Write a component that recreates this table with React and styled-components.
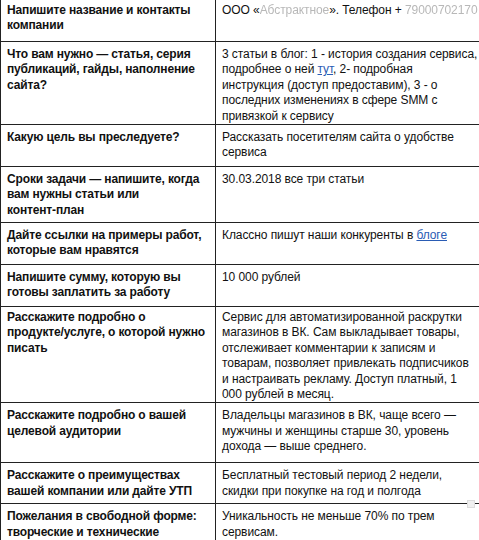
import React from 'react'
import styled, { createGlobalStyle } from 'styled-components'

const Global = createGlobalStyle`
  html, body {
    margin: 0;
    padding: 0;
    background: #fff;
    overflow: hidden;
  }
  body {
    font-family: 'Liberation Sans', Arial, sans-serif;
  }
`

const Page = styled.div`
  width: 479px;
  height: 540px;
  overflow: hidden;
  position: relative;
`

const Table = styled.table`
  border-collapse: collapse;
  width: 488px;
  margin-top: -3px;
  font-size: 12px;
  line-height: 15.4px;
  color: #111;
  table-layout: fixed;
`

const Row = styled.tr``

const Cell = styled.td`
  border: 1px solid #222;
  padding: ${p => (p.$tight ? 3 : 5)}px 6px 0 6px;
  vertical-align: top;
  height: ${p => p.$h}px;
  box-sizing: border-box;
  font-weight: ${p => (p.$head ? 700 : 400)};
  letter-spacing: ${p => (p.$head ? '-0.15px' : '-0.08px')};
  width: ${p => (p.$head ? '215px' : 'auto')};
  white-space: ${p => (p.$nowrap ? 'nowrap' : 'normal')};
  overflow: hidden;
`

const NoBreak = styled.span`
  white-space: nowrap;
`

const Link = styled.a`
  color: #2a5cb4;
  text-decoration: underline;
`

const Hidden = styled.span`
  color: #b8b8b8;
  filter: blur(0.6px);
`

const ScrollNub = styled.div`
  position: absolute;
  right: 4px;
  top: 500px;
  width: 8px;
  height: 8px;
  background: #f0f0f0;
  border: 1px solid #ddd;
  box-sizing: border-box;
`

const rows = [
  {
    q: 'Напишите название и контакты компании',
    h: 44,
    nowrap: true,
    a: (
      <>
        ООО «<Hidden>Абстрактное</Hidden>». Телефон + <Hidden>79000702170</Hidden>
      </>
    ),
  },
  {
    q: 'Что вам нужно — статья, серия публикаций, гайды, наполнение сайта?',
    h: 83,
    a: (
      <>
        3 статьи в блог: 1 - история создания сервиса, подробнее о ней <Link href="#">тут</Link>, 2- подробная{' '}
        <NoBreak>инструкция (доступ</NoBreak> предоставим), 3 - о последних изменениях в сфере SMM с привязкой к
        сервису
      </>
    ),
  },
  { q: 'Какую цель вы преследуете?', h: 42, a: 'Рассказать посетителям сайта о удобстве сервиса' },
  {
    q: (
      <>
        Сроки задачи — напишите, когда вам нужны статьи или <NoBreak>контент-план</NoBreak>
      </>
    ),
    h: 56,
    a: '30.03.2018 все три статьи',
  },
  {
    q: 'Дайте ссылки на примеры работ, которые вам нравятся',
    h: 42,
    a: (
      <>
        Классно пишут наши конкуренты в <Link href="#">блоге</Link>
      </>
    ),
  },
  { q: 'Напишите сумму, которую вы готовы заплатить за работу', h: 42, a: '10 000 рублей' },
  {
    q: (
      <>
        Расскажите подробно о <NoBreak>продукте/услуге,</NoBreak> о которой нужно писать
      </>
    ),
    h: 94,
    tight: true,
    a: (
      <>
        Сервис для автоматизированной раскрутки магазинов в ВК. Сам выкладывает товары, отслеживает комментарии к
        записям и товарам, позволяет привлекать подписчиков <NoBreak>и настраивать</NoBreak> рекламу. Доступ платный,
        1 <NoBreak>000 рублей</NoBreak> в месяц.
      </>
    ),
  },
  {
    q: 'Расскажите подробно о вашей целевой аудитории',
    h: 60,
    a: 'Владельцы магазинов в ВК, чаще всего — мужчины и женщины старше 30, уровень дохода — выше среднего.',
  },
  {
    q: 'Расскажите о преимуществах вашей компании или дайте УТП',
    h: 41,
    a: 'Бесплатный тестовый период 2 недели, скидки при покупке на год и полгода',
  },
  {
    q: 'Пожелания в свободной форме: творческие и технические',
    h: 40,
    a: 'Уникальность не меньше 70% по трем сервисам.',
  },
]

export default function App() {
  return (
    <Page>
      <Global />
      <Table>
        <tbody>
          {rows.map((r, i) => (
            <Row key={i}>
              <Cell $head $h={r.h} $tight={r.tight}>{r.q}</Cell>
              <Cell $h={r.h} $tight={r.tight} $nowrap={r.nowrap}>{r.a}</Cell>
            </Row>
          ))}
        </tbody>
      </Table>
      <ScrollNub />
    </Page>
  )
}
